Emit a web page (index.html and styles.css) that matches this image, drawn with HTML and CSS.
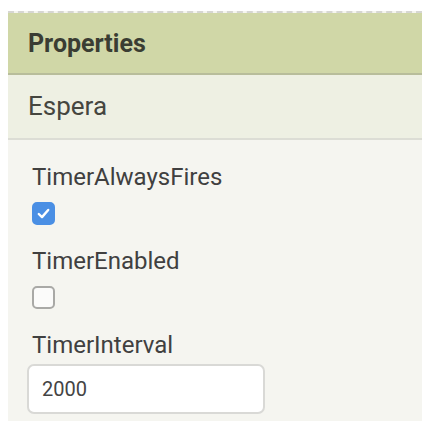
FILE: index.html
```html
<!DOCTYPE html>
<html lang="es">
<head>
<meta charset="utf-8">
<title>Properties</title>
<link rel="stylesheet" href="styles.css">
</head>
<body>
<div class="panel">
  <div class="panel-title">Properties</div>
  <div class="component-name">Espera</div>
  <div class="props">
    <div class="prop">
      <div class="prop-label">TimerAlwaysFires</div>
      <label class="check checked">
        <input type="checkbox" checked>
        <svg class="tick" viewBox="0 0 23 23" width="23" height="23"><path d="M6.8 12 L10 15.1 L16.2 8" fill="none" stroke="#fff" stroke-width="2.4" stroke-linecap="round" stroke-linejoin="round"/></svg>
      </label>
    </div>
    <div class="prop">
      <div class="prop-label">TimerEnabled</div>
      <label class="check">
        <input type="checkbox">
      </label>
    </div>
    <div class="prop prop-text">
      <div class="prop-label">TimerInterval</div>
      <input class="text-field" type="text" value="2000">
    </div>
  </div>
</div>
</body>
</html>
```
FILE: styles.css
```css
html, body {
  margin: 0;
  padding: 0;
  background: #ffffff;
}

body {
  font-family: Roboto, "Liberation Sans", sans-serif;
  color: #3c3c3c;
  padding-top: 11px;
  padding-left: 8px;
}

.panel {
  background: #f5f5f0;
  border-top: 2px dashed #d6d6d2;
  height: 408px;
}

.panel-title {
  height: 62px;
  box-sizing: border-box;
  background: #d0d7a7;
  border-bottom: 2px solid #b8bd9b;
  padding-left: 20px;
  display: flex;
  align-items: center;
  font-weight: 700;
  font-size: 25px;
  color: #3a3d33;
}

.component-name {
  height: 65px;
  box-sizing: border-box;
  background: #eef0e3;
  border-bottom: 2px solid #dcddd5;
  padding-left: 20px;
  padding-bottom: 2px;
  display: flex;
  align-items: center;
  font-size: 26px;
  color: #45463f;
}

.props {
  padding: 23px 0 0 24px;
  display: flex;
  flex-direction: column;
  gap: 22px;
}

.prop {
  display: flex;
  flex-direction: column;
  gap: 11px;
}

.prop-text {
  gap: 5px;
}

.prop-label {
  font-size: 24px;
  line-height: 28px;
  color: #404040;
}

.check {
  position: relative;
  width: 23px;
  height: 23px;
}

.check input {
  appearance: none;
  margin: 0;
  width: 23px;
  height: 23px;
  box-sizing: border-box;
  border: 2px solid #a9a9a6;
  border-radius: 5px;
  background: #fbfbfa;
  display: block;
}

.check.checked input {
  background: #4a8fe4;
  border-color: #4a8fe4;
}

.check .tick {
  position: absolute;
  left: 0;
  top: 0;
}

.text-field {
  width: 238px;
  height: 50px;
  box-sizing: border-box;
  margin-left: -5px;
  border: 2px solid #d9d9d6;
  border-radius: 7px;
  background: #ffffff;
  padding: 0 13px;
  font-family: Roboto, "Liberation Sans", sans-serif;
  font-size: 20px;
  color: #444;
  outline: none;
}
```
